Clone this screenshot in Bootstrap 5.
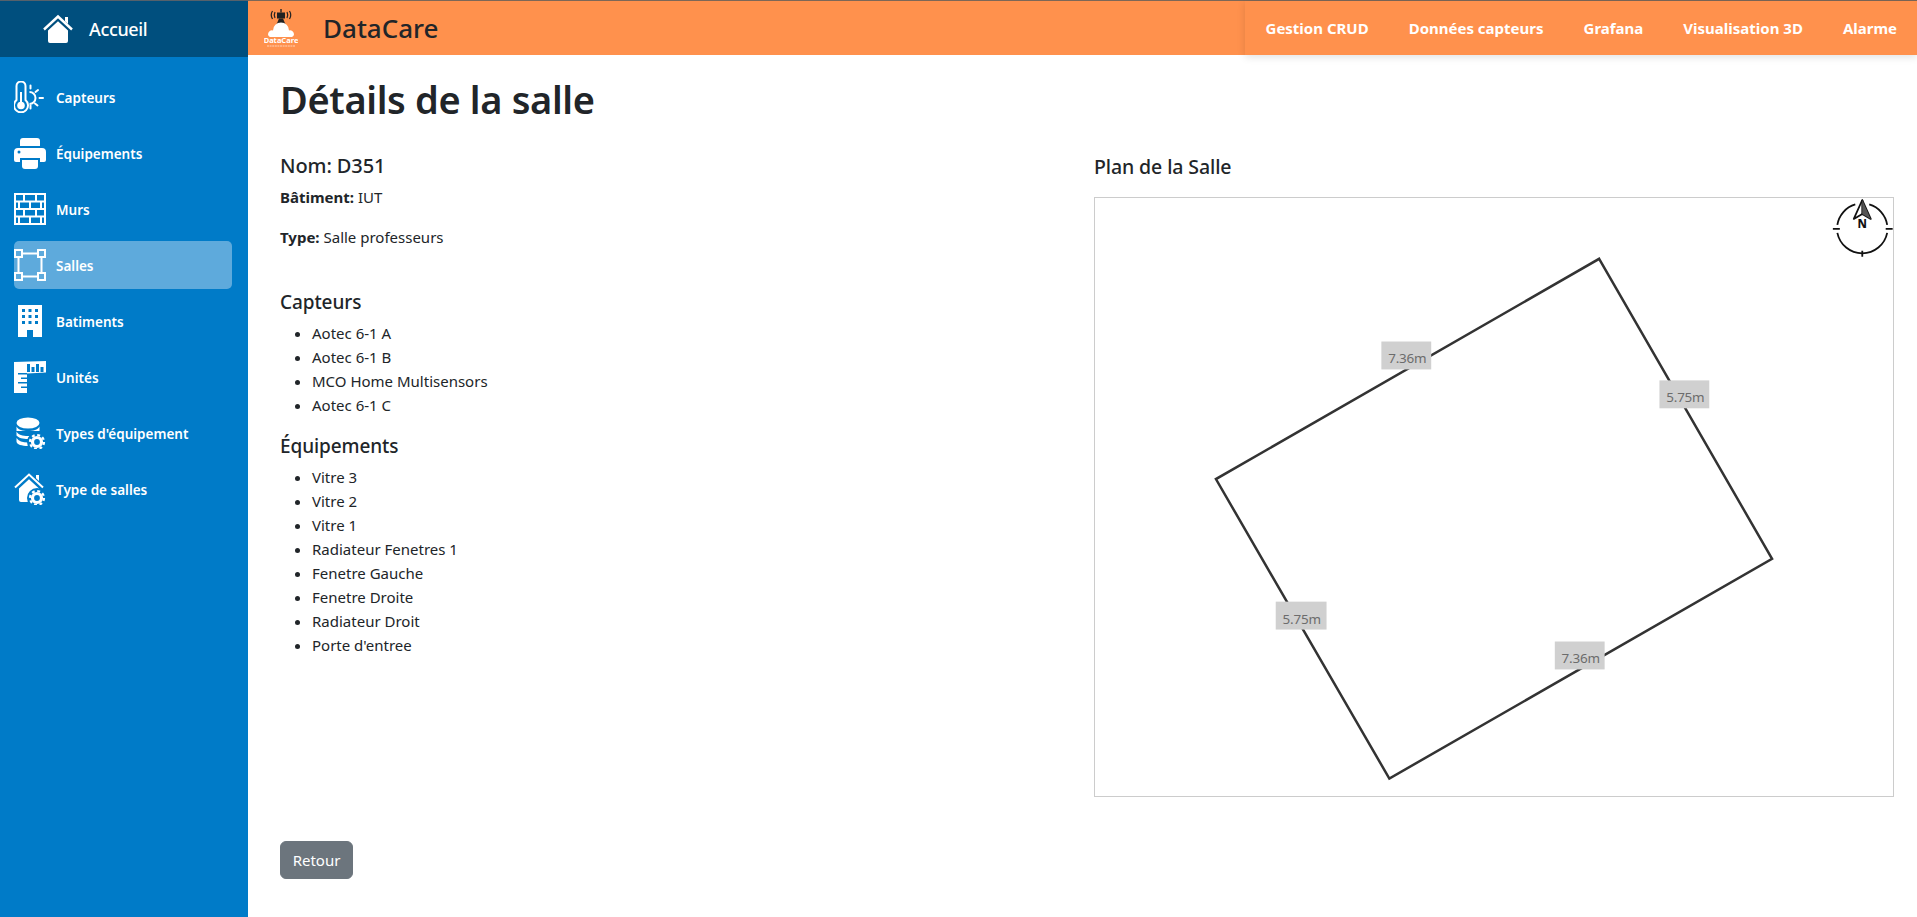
<!DOCTYPE html>
<html lang="fr">
<head>
    <meta charset="UTF-8">
    <meta name="viewport" content="width=device-width, initial-scale=1.0">
    <title>DataCare - Détails de la salle</title>
    <link href="https://cdn.jsdelivr.net/npm/bootstrap@5.3.0/dist/css/bootstrap.min.css" rel="stylesheet">
    <style>
        body {
            font-family: "Noto Sans", "Open Sans", sans-serif;
            color: #212529;
            height: 917px;
            overflow: hidden;
        }

        .side-panel {
            width: 248px;
            background: #007bc8;
            flex-shrink: 0;
        }

        .side-home {
            height: 57px;
            background: #004f7e;
            border-top: 1px solid #56616b;
            padding-left: 43px;
            gap: 16px;
            color: #fff;
            font-size: 18px;
            font-weight: 500;
            letter-spacing: -0.35px;
            text-decoration: none;
        }

        .side-links {
            padding: 16px 16px 0 14px;
            gap: 8px;
        }

        .side-links .nav-link {
            height: 48px;
            padding: 0;
            gap: 10px;
            color: #fff;
            font-size: 13.5px;
            font-weight: 600;
            border-radius: 5px;
        }

        .side-links .nav-link.active {
            background: #5eaadc;
        }

        .side-text {
            padding-top: 3px;
        }

        .side-icon {
            width: 32px;
            height: 32px;
            flex-shrink: 0;
        }

        .top-bar {
            height: 55px;
            background: #ff914d;
            border-top: 1px solid #7d6757;
            padding: 0;
        }

        .brand-logo {
            width: 34px;
            height: 38px;
            margin-left: 16px;
        }

        .brand-name {
            margin-left: 25px;
            font-size: 26px;
            font-weight: 500;
            color: #212529;
        }

        .top-links {
            height: 54px;
            padding: 0 0 0 1px;
            box-shadow: 0 2px 8px rgba(0, 0, 0, .12);
        }

        .top-links .nav-link {
            padding: 0 20px;
            color: #fff;
            font-size: 15px;
            font-weight: 700;
        }

        .page-body {
            padding: 0 0 0 32px;
        }

        .page-title {
            font-size: 38px;
            font-weight: 600;
            letter-spacing: -0.35px;
            line-height: 48px;
            margin: 20px 0 29px;
        }

        .info-col {
            width: 814px;
            flex-shrink: 0;
        }

        .info-col p {
            font-size: 15px;
            margin-bottom: 16px;
            line-height: 24px;
        }

        .info-col h4,
        .plan-col h4 {
            font-size: 19px;
            font-weight: 500;
            letter-spacing: -0.1px;
            line-height: 24px;
            margin-bottom: 7px;
        }

        .info-col ul {
            font-size: 15px;
            line-height: 24px;
            margin-bottom: 17px;
            padding-left: 32px;
        }

        .info-col .room-name {
            font-size: 20px;
            padding-top: 2px;
        }

        .section-gap {
            margin-top: 41px;
        }

        .plan-col h4 {
            font-size: 19.5px;
            margin-top: 3px;
            margin-bottom: 18px;
        }

        .plan-box {
            display: block;
            width: 800px;
            height: 600px;
            border: 1px solid #ccc;
        }

        .plan-label {
            font-size: 13.5px;
            letter-spacing: -0.2px;
            fill: #6c6c6c;
            text-anchor: middle;
        }

        .back-btn {
            margin-top: 44px;
            width: 73px;
            height: 38px;
            padding: 0;
            font-size: 15px;
            background: #6c757d;
        }
    </style>
</head>
<body class="d-flex">
    <!-- Sidebar -->
    <aside class="side-panel">
        <a href="#" class="side-home d-flex align-items-center">
            <svg width="30" height="30" viewBox="0 0 30 30"><path fill="none" stroke="#fff" stroke-width="2.400" d="M1 15.500 15 2.500l14 13"/><path fill="#fff" d="M22 3h3v7l-3-2.700zM5 16.500 15 7.300l10 9.200V27a2 2 0 0 1-2 2H7a2 2 0 0 1-2-2z"/></svg>
            Accueil
        </a>
        <nav class="nav flex-column side-links">
            <a class="nav-link d-flex align-items-center" href="#">
                <svg class="side-icon" viewBox="0 0 32 32" fill="none" stroke="#fff" stroke-width="2"><path d="M2.500 5a4.500 4.500 0 0 1 9 0v14a7 7 0 1 1-9 0z"/><circle cx="7" cy="24.500" r="3.800" fill="#fff" stroke="none"/><path d="M7 24V11"/><path stroke-linecap="round" d="M16.500 4.500v3M24 9l-2.500 2M29 17h-3.500M23.500 24.500 21 22.500M16.500 24.500v3"/><path d="M15.500 11a6 6 0 0 1 0 12"/></svg>
                <span class="side-text">Capteurs</span>
            </a>
            <a class="nav-link d-flex align-items-center" href="#">
                <svg class="side-icon" viewBox="0 0 32 32" fill="#fff"><path d="M6 9V4a3 3 0 0 1 3-3h14a3 3 0 0 1 3 3v5z"/><path d="M4 11h24a4 4 0 0 1 4 4v8a2 2 0 0 1-2 2h-4v-4H6v4H2a2 2 0 0 1-2-2v-8a4 4 0 0 1 4-4z"/><path d="M8 23h16v6a3 3 0 0 1-3 3H11a3 3 0 0 1-3-3z"/><circle cx="5" cy="15" r="1.500" fill="#007bc8"/></svg>
                <span class="side-text">Équipements</span>
            </a>
            <a class="nav-link d-flex align-items-center" href="#">
                <svg class="side-icon" viewBox="0 0 32 32" fill="none" stroke="#fff" stroke-width="2"><rect x="1" y="1" width="30" height="30"/><path d="M1 8.500h30M1 16h30M1 23.500h30M10 1v7.500M22 1v7.500M5 8.500V16M16 8.500V16M27 8.500V16M10 16v7.500M22 16v7.500M5 23.500V31M16 23.500V31M27 23.500V31"/></svg>
                <span class="side-text">Murs</span>
            </a>
            <a class="nav-link active d-flex align-items-center" href="#">
                <svg class="side-icon" viewBox="0 0 32 32" fill="none" stroke="#fff" stroke-width="2"><rect x="1" y="1" width="7" height="7"/><rect x="24" y="1" width="7" height="7"/><rect x="1" y="24" width="7" height="7"/><rect x="24" y="24" width="7" height="7"/><path d="M8 4.500h16M8 27.500h16M4.500 8v16M27.500 8v16"/></svg>
                <span class="side-text">Salles</span>
            </a>
            <a class="nav-link d-flex align-items-center" href="#">
                <svg class="side-icon" viewBox="0 0 32 32"><path fill="#fff" fill-rule="evenodd" d="M4 0h24v32H19v-7h-6v7H4zM8 4v3h3V4zm6.500 0v3h3V4zM21 4v3h3V4zM8 10v3h3v-3zm6.500 0v3h3v-3zM21 10v3h3v-3zM8 16v3h3v-3zm6.500 0v3h3v-3zM21 16v3h3v-3z"/></svg>
                <span class="side-text">Batiments</span>
            </a>
            <a class="nav-link d-flex align-items-center" href="#">
                <svg class="side-icon" viewBox="0 0 32 32"><path fill="#fff" d="M0 1 32 0v11.500L13 12.500V32H0z"/><path fill="#007bc8" d="M13 3h3v8h-3zM17.500 6h3v5h-3zM22 3h3v8h-3zM26.500 6h3v5h-3zM4 12h9v1.500H4zM7 16.500h6V18H7zM4 21h9v1.500H4zM7 25.500h6V27H7z"/></svg>
                <span class="side-text">Unités</span>
            </a>
            <a class="nav-link d-flex align-items-center" href="#">
                <svg class="side-icon" viewBox="0 0 32 32"><ellipse cx="14" cy="6" rx="11.500" ry="5.500" fill="#fff"/><path fill="#fff" d="M2.500 9.500c2 3.500 6 4.500 11.500 4.500s9.500-1 11.500-4.500V14H2.500zM2.500 14.500c2 3.500 6 4.500 11.500 4.500h7v3H14c-5 0-9.500-1-11.500-3.500zM2.500 21c2 3 6 4.500 11.500 4.500v3.500c-6 0-11.500-1.500-11.500-4.500z"/><circle cx="23" cy="25" r="10" fill="#007bc8"/><circle cx="23" cy="25" r="4.500" fill="none" stroke="#fff" stroke-width="3.200"/><circle cx="23" cy="25" r="7" fill="none" stroke="#fff" stroke-width="2.200" stroke-dasharray="2.900 2.600"/></svg>
                <span class="side-text">Types d'équipement</span>
            </a>
            <a class="nav-link d-flex align-items-center" href="#">
                <svg class="side-icon" viewBox="0 0 32 32"><path fill="none" stroke="#fff" stroke-width="2" d="M1 14.500 15 1.500l14 13"/><path fill="#fff" d="M22 2h3v6l-3-2.700zM5 15.500 15 6.300l10 9.200V27a2 2 0 0 1-2 2H7a2 2 0 0 1-2-2z"/><circle cx="23" cy="25" r="10" fill="#007bc8"/><circle cx="23" cy="25" r="4.500" fill="none" stroke="#fff" stroke-width="3.200"/><circle cx="23" cy="25" r="7" fill="none" stroke="#fff" stroke-width="2.200" stroke-dasharray="2.900 2.600"/></svg>
                <span class="side-text">Type de salles</span>
            </a>
        </nav>
    </aside>

    <div class="flex-grow-1">
        <!-- Top bar -->
        <nav class="navbar top-bar align-items-center justify-content-between">
            <div class="d-flex align-items-center">
                <svg class="brand-logo" viewBox="0 0 34 38">
                    <path fill="none" stroke="#222" stroke-width="1.200" d="M11 3Q9.500 6 11 9M8.500 2Q6 6 8.500 10M23 3Q24.500 6 23 9M25.500 2Q28 6 25.500 10"/>
                    <rect x="13" y="3.500" width="8" height="6" fill="#222"/>
                    <path fill="#222" d="M16.300 0h1.400v3.500h-1.400zM15 9.500h4l5 12h-3l-4-7-4 7h-3z"/>
                    <path fill="#fff" d="M4 25.500a4 4 0 0 1 5-4 8 8 0 0 1 16 0 4 4 0 0 1 5 4 3 3 0 0 1-2 2.500H6a3 3 0 0 1-2-2.500z"/>
                    <text x="17" y="34" text-anchor="middle" font-size="7.500" font-weight="700" fill="#fff">DataCare</text>
                    <path stroke="#fff" stroke-width=".600" stroke-dasharray="2 .6" d="M3 37h28"/>
                </svg>
                <span class="brand-name">DataCare</span>
            </div>
            <div class="nav top-links align-items-center">
                <a class="nav-link" href="#">Gestion CRUD</a>
                <a class="nav-link" href="#">Données capteurs</a>
                <a class="nav-link" href="#">Grafana</a>
                <a class="nav-link" href="#">Visualisation 3D</a>
                <a class="nav-link" href="#">Alarme</a>
            </div>
        </nav>

        <main class="page-body">
            <h1 class="page-title">Détails de la salle</h1>
            <div class="d-flex">
                <div class="info-col">
                    <h4 class="room-name">Nom: D351</h4>
                    <p><strong>Bâtiment:</strong> IUT</p>
                    <p><strong>Type:</strong> Salle professeurs</p>
                    <h4 class="section-gap">Capteurs</h4>
                    <ul>
                        <li>Aotec 6-1 A</li>
                        <li>Aotec 6-1 B</li>
                        <li>MCO Home Multisensors</li>
                        <li>Aotec 6-1 C</li>
                    </ul>
                    <h4>Équipements</h4>
                    <ul>
                        <li>Vitre 3</li>
                        <li>Vitre 2</li>
                        <li>Vitre 1</li>
                        <li>Radiateur Fenetres 1</li>
                        <li>Fenetre Gauche</li>
                        <li>Fenetre Droite</li>
                        <li>Radiateur Droit</li>
                        <li>Porte d'entree</li>
                    </ul>
                </div>
                <div class="plan-col">
                    <h4>Plan de la Salle</h4>
                    <svg class="plan-box" viewBox="0 0 800 600">
                        <polygon points="505.500,61 679,362 295,582.500 121,282" fill="none" stroke="#333" stroke-width="2.500"/>
                        <rect x="287" y="144" width="50" height="28" fill="#d0d0d0"/>
                        <text class="plan-label" x="313" y="166">7.36m</text>
                        <rect x="566" y="183" width="50" height="28" fill="#d0d0d0"/>
                        <text class="plan-label" x="592" y="205">5.75m</text>
                        <rect x="181" y="405" width="51" height="28" fill="#d0d0d0"/>
                        <text class="plan-label" x="207" y="427">5.75m</text>
                        <rect x="461" y="445" width="50" height="28" fill="#d0d0d0"/>
                        <text class="plan-label" x="487" y="467">7.36m</text>
                        <!-- Compass -->
                        <g fill="none" stroke="#111" stroke-width="1.800">
                            <path d="M776.500 6.500A25.500 25.500 0 0 1 794.500 27M794.500 35A25.500 25.500 0 0 1 744.500 35M744.500 27A25.500 25.500 0 0 1 762.500 6.500"/>
                            <path d="M740 31h7M793 31h7M769.500 53v6"/>
                            <path stroke-linejoin="round" d="M769.500 2 761 21 769.500 16 778 21z"/>
                            <path d="M769.500 2V16"/>
                        </g>
                        <path d="M769.500 2V16L778 21z" fill="#555"/>
                        <text x="769.500" y="30.500" text-anchor="middle" font-size="11.500" font-weight="800" fill="#111">N</text>
                    </svg>
                </div>
            </div>
            <a href="#" class="btn btn-secondary back-btn d-inline-flex align-items-center justify-content-center">Retour</a>
        </main>
    </div>

    <script src="https://cdn.jsdelivr.net/npm/bootstrap@5.3.0/dist/js/bootstrap.bundle.min.js"></script>
</body>
</html>
